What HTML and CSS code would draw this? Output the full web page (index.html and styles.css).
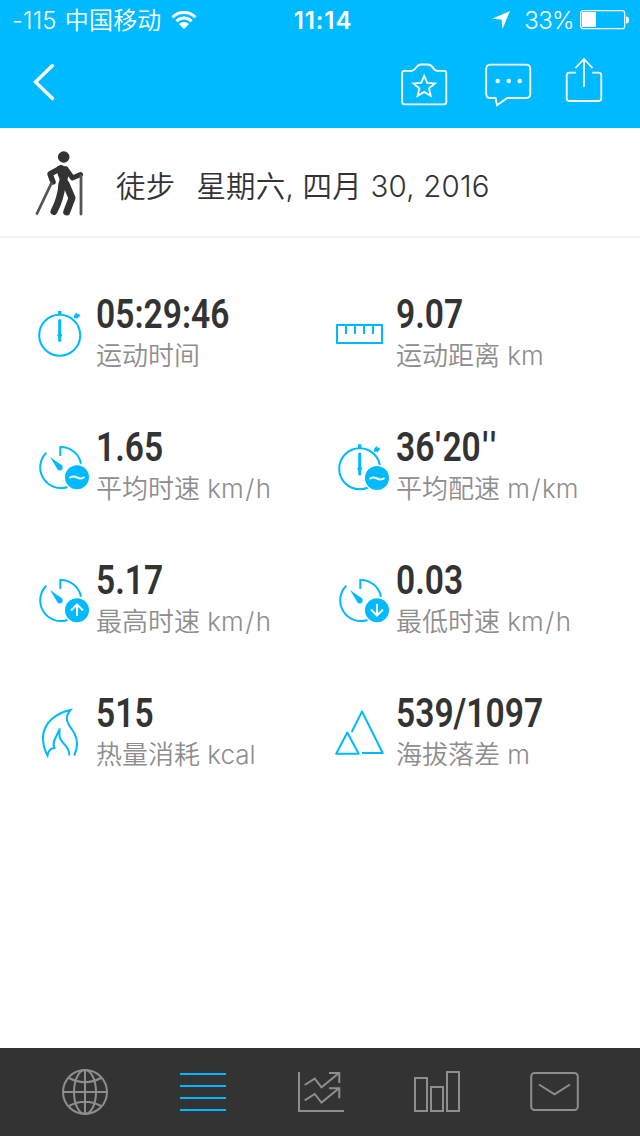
FILE: index.html
```html
<!DOCTYPE html>
<html lang="zh-CN">
<head>
  <meta charset="UTF-8">
  <meta name="viewport" content="width=device-width, initial-scale=1.0">
  <title>徒步</title>
  <link rel="stylesheet" href="styles.css">
</head>
<body>
  <header>
    <div class="status">
      <div class="carrier">
        <span>-115 中国移动</span>
        <svg width="26" height="20" viewBox="0 0 26 20">
          <path d="M1.5 7.2a16.2 16.2 0 0 1 23 0M5.5 11.2a10.6 10.6 0 0 1 15 0" fill="none" stroke="#fff" stroke-width="3"/>
          <path d="M8 14a7 7 0 0 1 10 0l-5 5z" fill="#fff"/>
        </svg>
      </div>
      <div class="clock">11:14</div>
      <div class="power">
        <svg class="location" width="18" height="18" viewBox="0 0 18 18"><path d="M18 0L10.5 18 9.5 8.5 0 7.7z" fill="#fff"/></svg>
        <span>33%</span>
        <svg width="50" height="20" viewBox="0 0 50 20">
          <rect x=".7" y=".7" width="44" height="18" rx="2.5" fill="none" stroke="#fff" stroke-width="1.2"/>
          <rect x="2" y="2" width="14" height="15" rx="1" fill="#fff"/>
          <path d="M46 6.5q3 0 3 3.5t-3 3.5z" fill="#fff"/>
        </svg>
      </div>
    </div>
    <nav class="top-nav">
      <svg class="back" width="24" height="40" viewBox="0 0 24 40"><path d="M20.500 4.500L3.500 21l17 16.500"/></svg>
      <svg class="camera" width="48" height="52" viewBox="0 -4 48 52">
        <path d="M4.500 10.800h6.500q3 0 5-3t5.500-3.300h6q3.500 0 5.500 3.300t5 3H44q2.300 0 2.300 2.300V42q0 2.300-2.300 2.300H4.500Q2.200 44.300 2.200 42V13q0-2.200 2.300-2.200z"/>
        <path d="M24.200 15.800l3 7 7.800.6-6 5 1.800 7.400-6.600-3.900-6.600 3.900 1.800-7.400-6-5 7.800-.6z"/>
      </svg>
      <svg class="chat" width="48" height="52" viewBox="0 -4 48 52">
        <path d="M6.500 4.700h35.500q4.300 0 4.300 4.300v25q0 4-4.300 4H23.300L13 45.300 11.600 38H6.500Q2.200 38 2.200 34V9q0-4.300 4.300-4.300z"/>
        <g class="dots"><circle cx="13.700" cy="21" r="2.200"/><circle cx="24.700" cy="21" r="2.200"/><circle cx="35.700" cy="21" r="2.200"/></g>
      </svg>
      <svg width="40" height="52" viewBox="0 -4 40 52">
        <path d="M12 12.700H5.500Q2.700 12.700 2.700 15.500v22.700Q2.700 41 5.500 41h29q2.800 0 2.800-2.800V15.500q0-2.800-2.800-2.800h-6.200M20 26.800V-1M11.500 8L20-1l8.500 9"/>
      </svg>
    </nav>
  </header>

  <div class="activity">
    <svg width="56" height="72" viewBox="0 0 56 72">
      <circle cx="31.700" cy="9" r="5.800" fill="#333"/>
      <path d="M25 18.500l4-1.500 6 2 2 5-1.500 8 2.500 8-12 1 1.500-10-2-5z" fill="#333"/>
      <g fill="none" stroke="#333" stroke-linecap="round" stroke-linejoin="round">
        <path d="M29 20l-11 6 3 8" stroke-width="5.500"/>
        <path d="M34 21l6.500 9 8-3.500" stroke-width="5"/>
        <path d="M30 36q-1 14-8 27.500M34 36l6 14-5.300 14" stroke-width="7"/>
        <path d="M19.500 35L5 65.500M49 28v38" stroke-width="2.800" stroke="#555"/>
      </g>
    </svg>
    <span class="sport">徒步</span>
    <span class="date">星期六, 四月 30, 2016</span>
  </div>

  <main class="stats">
    <div class="stat">
      <svg width="64" height="82" viewBox="0 0 64 82">
        <circle cx="27.700" cy="43.300" r="20.500"/>
        <path d="M27.700 28.500v20" stroke-width="3" stroke-linecap="round"/>
        <path class="solid" d="M26 19h3.400v4H26zM42 23.500l2.500-3 1 1.500 2.500.5-.5 2.500-1.500.5-.5 1.500-1.500-1-2 .5zM27.700 40.300l2.700 3-2.700 3-2.700-3z"/>
      </svg>
      <div>
        <div class="value">05:29:46</div>
        <div class="label">运动时间</div>
      </div>
    </div>
    <div class="stat">
      <svg width="64" height="82" viewBox="0 0 64 82">
        <path d="M5 33h45v18H5zM14 33v9M23 33v9M32 33v9M41 33v9"/>
      </svg>
      <div>
        <div class="value">9.07</div>
        <div class="label">运动距离 km</div>
      </div>
    </div>
    <div class="stat">
      <svg width="64" height="82" viewBox="0 0 64 82">
        <path d="M28.300 31V22a20.700 20.700 0 0 1 20.700 16.700M35.500 62A20.700 20.700 0 0 1 14.300 27.700"/>
        <path class="solid" d="M18 32l12.500 8.800.2 3-1.700 1.700-3-.2z"/>
        <circle class="badge" cx="45" cy="52.300" r="12"/>
        <path class="mark" d="M37.500 53q3.500-2.500 7.500-.5t7.500-.5"/>
      </svg>
      <div>
        <div class="value">1.65</div>
        <div class="label">平均时速 km<span class="slash">/</span>h</div>
      </div>
    </div>
    <div class="stat">
      <svg width="64" height="82" viewBox="0 0 64 82">
        <circle cx="27.700" cy="43.700" r="20.500"/>
        <path d="M27.700 29v20" stroke-width="3" stroke-linecap="round"/>
        <path class="solid" d="M26 19.200h3.400v4H26zM42 24l2.500-3 1 1.500 2.500.5-.5 2.500-1.500.5-.5 1.500-1.500-1-2 .5zM27.700 40.700l2.700 3-2.700 3-2.700-3z"/>
        <circle cx="45" cy="53" r="13.300" fill="#fff" stroke="none"/>
        <circle class="badge" cx="45" cy="53" r="12"/>
        <path class="mark" d="M37.500 54q3.500-2.500 7.500-.5t7.500-.5"/>
      </svg>
      <div>
        <div class="value">36<span class="minute">'</span>20<span class="second">''</span></div>
        <div class="label">平均配速 m<span class="slash">/</span>km</div>
      </div>
    </div>
    <div class="stat">
      <svg width="64" height="82" viewBox="0 0 64 82">
        <path d="M28.300 31V22a20.700 20.700 0 0 1 20.700 16.700M35.500 62A20.700 20.700 0 0 1 14.300 27.700"/>
        <path class="solid" d="M18 32l12.500 8.800.2 3-1.700 1.700-3-.2z"/>
        <circle class="badge" cx="45" cy="52.300" r="12"/>
        <path class="mark" d="M45 58V46.500M39 52.500l6-6 6 6"/>
      </svg>
      <div>
        <div class="value">5.17</div>
        <div class="label">最高时速 km<span class="slash">/</span>h</div>
      </div>
    </div>
    <div class="stat">
      <svg width="64" height="82" viewBox="0 0 64 82">
        <path d="M28.300 31V22a20.700 20.700 0 0 1 20.700 16.700M35.500 62A20.700 20.700 0 0 1 14.300 27.700"/>
        <path class="solid" d="M18 32l12.500 8.800.2 3-1.700 1.700-3-.2z"/>
        <circle class="badge" cx="45" cy="52.300" r="12"/>
        <path class="mark" d="M45 46v11.500M39 51.500l6 6 6-6"/>
      </svg>
      <div>
        <div class="value">0.03</div>
        <div class="label">最低时速 km<span class="slash">/</span>h</div>
      </div>
    </div>
    <div class="stat">
      <svg width="64" height="82" viewBox="0 0 64 82">
        <path d="M42.300 64.500C45.500 57 46 49 42.500 42.500 38.500 35 30 29 38.500 19 24 22 11 32 11 47q0 9 4.500 17.500c1-5 3-7.500 6.800-7.500-3-7 3.500-12 5.400-19.500-1 9 .5 11.500 4 15 4 4 6 7 5.600 12"/>
      </svg>
      <div>
        <div class="value">515</div>
        <div class="label">热量消耗 kcal</div>
      </div>
    </div>
    <div class="stat">
      <svg width="64" height="82" viewBox="0 0 64 82">
        <path d="M19.700 41L30 20.500 50.700 62H30M15.300 41.500L4.200 62.800h22.500z" stroke-linejoin="round"/>
      </svg>
      <div>
        <div class="value">539/1097</div>
        <div class="label">海拔落差 m</div>
      </div>
    </div>
  </main>

  <footer class="tabs">
    <svg width="50" height="48" viewBox="0 0 50 48">
      <path d="M25 1.700v44.600M2.700 24h44.600M9 10q16 8.500 32 0M9 38q16-8.500 32 0"/>
      <circle cx="25" cy="24" r="22"/>
      <ellipse cx="25" cy="24" rx="11" ry="22"/>
    </svg>
    <svg class="active" width="50" height="48" viewBox="0 0 50 48"><path d="M2 6h46M2 18h46M2 30h46M2 42h46"/></svg>
    <svg width="50" height="48" viewBox="0 0 50 48">
      <path d="M3 4v39h45M8.700 17l10-6.300 6.800 8.600L43 5M33 5h10.300v10M8.700 32.300l10-6.300 6.800 8.600L43 20.300M33 20.300h10.300v10"/>
    </svg>
    <svg width="50" height="48" viewBox="0 0 50 48"><path d="M3 10h12v33H3zM19 19h12v24H19zM35 4h12v39H35z"/></svg>
    <svg width="50" height="48" viewBox="0 0 50 48">
      <rect x="1.200" y="5" width="46.600" height="37" rx="3.500"/>
      <path d="M9 16.500l15.500 9.800L40 16.500"/>
    </svg>
  </footer>
</body>
</html>
```

FILE: styles.css
```css
* {
  box-sizing: border-box;
}

body {
  margin: 0;
  height: 1136px;
  display: flex;
  flex-direction: column;
  background: #fff;
  color: #333;
  font-family: Inter, "Noto Sans CJK SC", sans-serif;
  font-weight: 350;
}

svg {
  display: block;
  flex: none;
}

header {
  height: 128px;
  background: #00baff;
  color: #fff;
}

/* Status bar */
.status {
  display: grid;
  grid-template-columns: 1fr 100px 1fr;
  align-items: center;
  height: 40px;
  padding: 0 10px 0 12px;
  font-size: 24px;
  line-height: 40px;
  white-space: nowrap;
}

.status span,
.clock {
  padding-top: 2px;
  line-height: 38px;
}

.carrier,
.power {
  display: flex;
  align-items: center;
}

.carrier {
  gap: 9px;
  letter-spacing: 0.2px;
  word-spacing: 1px;
}

.clock {
  padding-left: 4px;
  text-align: center;
  font-weight: 600;
  letter-spacing: 0.9px;
}

.power {
  justify-content: flex-end;
  gap: 6px;
  letter-spacing: -0.6px;
}

.location {
  margin-right: 8px;
}

/* Navigation */
.top-nav {
  display: flex;
  height: 88px;
  padding: 16px 36px 0 32px;
}

.top-nav svg {
  fill: none;
  stroke: #fff;
  stroke-width: 1.8;
}

.top-nav .back {
  margin-top: 5px;
  margin-right: auto;
  stroke-width: 3.4;
  stroke-linecap: round;
}

.camera {
  margin-right: 36px;
}

.chat {
  margin-right: 32px;
}

.top-nav .dots {
  fill: #fff;
  stroke: none;
}

.activity {
  display: flex;
  align-items: center;
  height: 110px;
  padding: 3px 0 0 32px;
  border-bottom: 2px solid #f2f2f2;
  font-size: 29.5px;
  letter-spacing: 0.2px;
  white-space: nowrap;
}

.sport {
  margin: 0 21px 0 28px;
}

/* Stats */
.stats {
  flex: 1;
  display: grid;
  grid-template-columns: 300px 300px;
  grid-auto-rows: 82px;
  row-gap: 51px;
  padding: 54px 0 0 32px;
}

.stat {
  display: flex;
  white-space: nowrap;
}

.stat svg {
  fill: none;
  stroke: #00baff;
  stroke-width: 2;
}

.stat .solid,
.stat .badge {
  fill: #00baff;
  stroke: none;
}

.stat .mark {
  stroke: #fff;
}

.value {
  height: 44px;
  line-height: 46px;
  font-family: Roboto, sans-serif;
  font-size: 40px;
  font-weight: 600;
  transform: scaleX(0.84);
  transform-origin: left;
}

.minute {
  margin: 0 2px 0 1px;
}

.second {
  margin-left: 2px;
  letter-spacing: 4px;
}

.label {
  height: 38px;
  line-height: 40px;
  font-size: 26px;
  color: #8e8e8e;
}

.slash {
  margin: 0 1.5px;
}

/* Tab bar */
.tabs {
  display: grid;
  grid-template-columns: 118px 118px 116px 118px 50px;
  height: 88px;
  padding: 20px 0 0 60px;
  background: #333;
}

.tabs svg {
  fill: none;
  stroke: #8e8e8e;
  stroke-width: 2;
}

.tabs .active {
  stroke: #00baff;
}
```
